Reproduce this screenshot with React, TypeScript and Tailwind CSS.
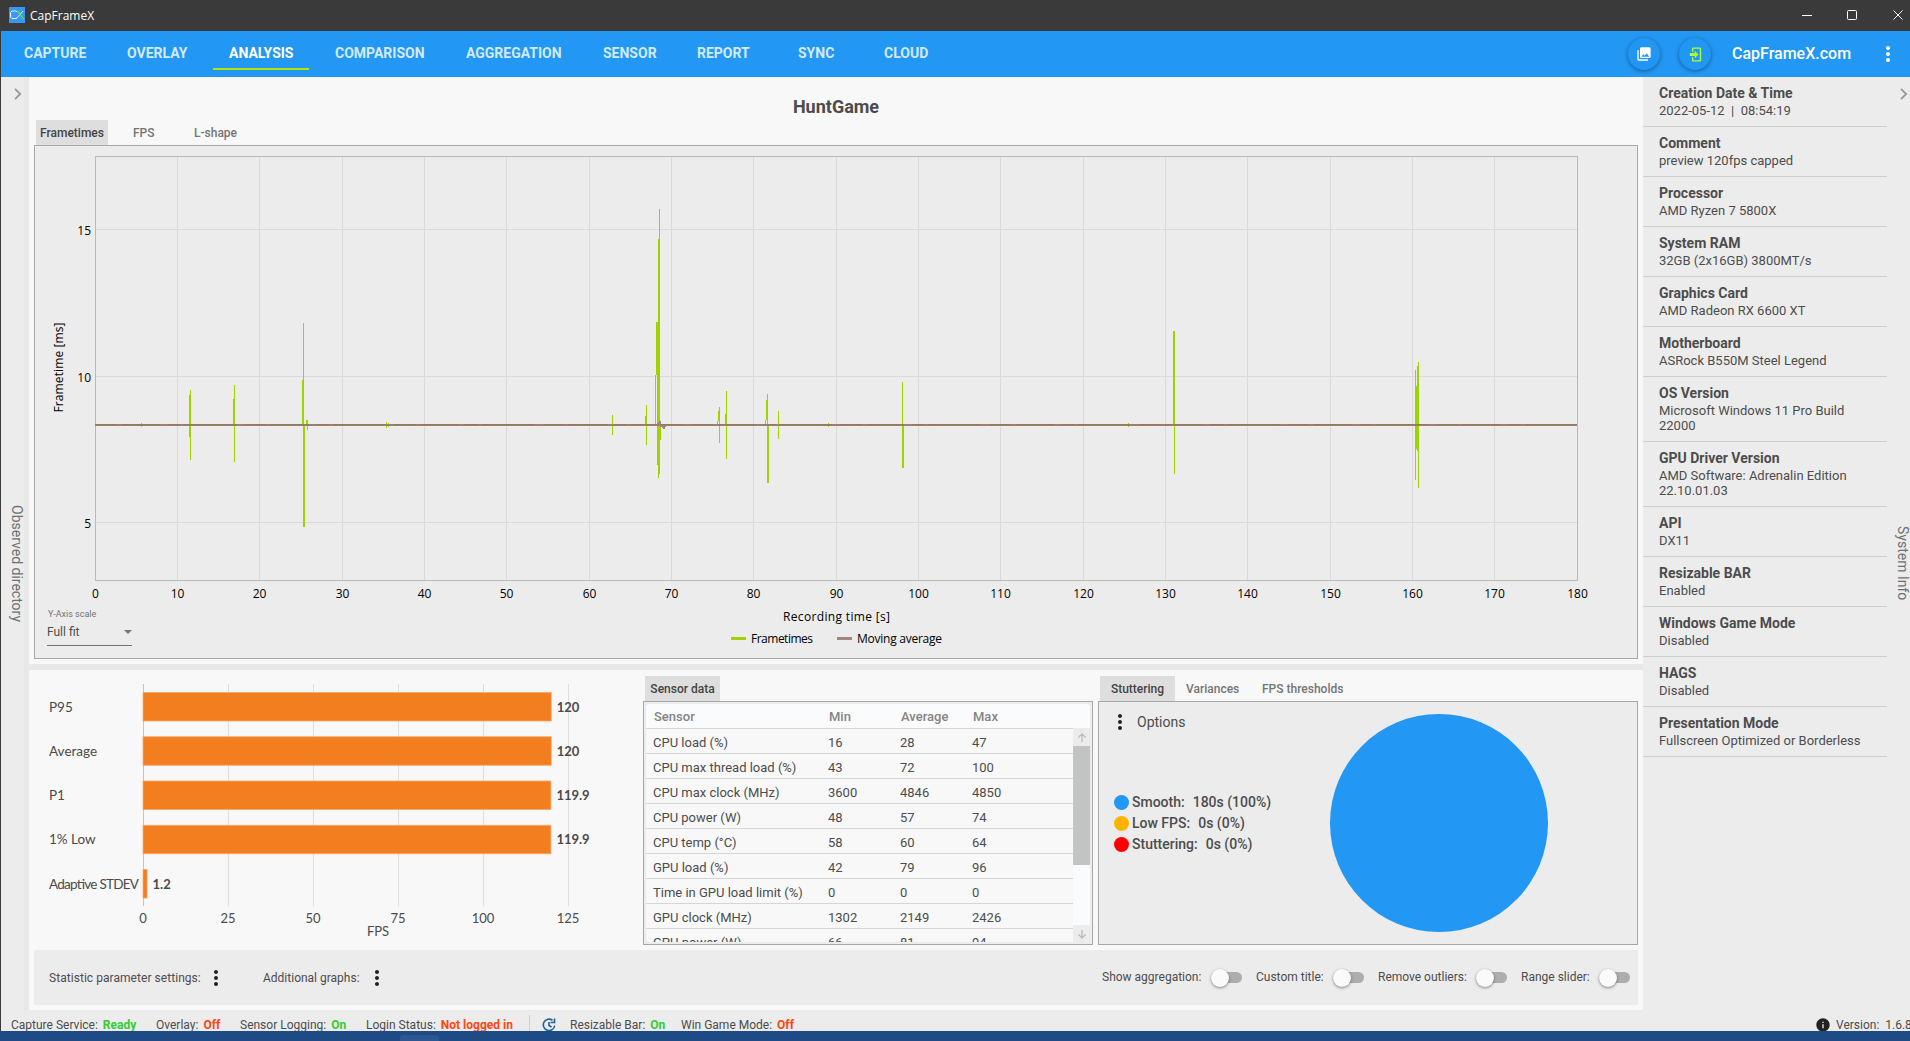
import type { ReactNode } from "react";
import { MdCollections, MdMoreVert, MdInfo } from "react-icons/md";

const navItems = [
  { label: "CAPTURE", width: "w-[103px]" },
  { label: "OVERLAY", width: "w-[102px]" },
  { label: "ANALYSIS", width: "w-[106px]" },
  { label: "COMPARISON", width: "w-[131px]" },
  { label: "AGGREGATION", width: "w-[137px]" },
  { label: "SENSOR", width: "w-[94px]" },
  { label: "REPORT", width: "w-[101px]" },
  { label: "SYNC", width: "w-[86px]" },
  { label: "CLOUD", width: "w-[90px]" },
];

const systemInfo = [
  ["Creation Date & Time", "2022-05-12  |  08:54:19"],
  ["Comment", "preview 120fps capped"],
  ["Processor", "AMD Ryzen 7 5800X"],
  ["System RAM", "32GB (2x16GB) 3800MT/s"],
  ["Graphics Card", "AMD Radeon RX 6600 XT"],
  ["Motherboard", "ASRock B550M Steel Legend"],
  ["OS Version", "Microsoft Windows 11 Pro Build\n22000"],
  ["GPU Driver Version", "AMD Software: Adrenalin Edition\n22.10.01.03"],
  ["API", "DX11"],
  ["Resizable BAR", "Enabled"],
  ["Windows Game Mode", "Disabled"],
  ["HAGS", "Disabled"],
  ["Presentation Mode", "Fullscreen Optimized or Borderless"],
];

const sensors = [
  ["CPU load (%)", 16, 28, 47],
  ["CPU max thread load (%)", 43, 72, 100],
  ["CPU max clock (MHz)", 3600, 4846, 4850],
  ["CPU power (W)", 48, 57, 74],
  ["CPU temp (°C)", 58, 60, 64],
  ["GPU load (%)", 42, 79, 96],
  ["Time in GPU load limit (%)", 0, 0, 0],
  ["GPU clock (MHz)", 1302, 2149, 2426],
  ["GPU power (W)", 66, 81, 94],
];

const fpsBars = [
  { label: "P95", value: 120 },
  { label: "Average", value: 120 },
  { label: "P1", value: 119.9 },
  { label: "1% Low", value: 119.9 },
  { label: "Adaptive STDEV", value: 1.2 },
];

// one entry per pixel column: [x, top, bottom]
const spikes = [
  [141, 423, 427],
  [189, 395, 437], [190, 390, 460],
  [233, 399, 425], [234, 385, 462],
  [302, 380, 425], [303, 323, 527], [304, 425, 527],
  [306, 420, 425], [307, 420, 430],
  [386, 422, 428], [388, 423, 427],
  [612, 415, 435],
  [645, 416, 425], [646, 405, 445],
  [655, 375, 425], [656, 322, 375], [657, 322, 465], [658, 239, 478], [659, 209, 474], [660, 425, 440],
  [717, 421, 425], [718, 411, 421], [719, 407, 443],
  [725, 414, 425], [726, 391, 459],
  [765, 420, 425], [766, 400, 420], [767, 394, 483], [768, 425, 483],
  [778, 411, 439],
  [828, 423, 427],
  [902, 382, 468], [903, 425, 468],
  [1128, 423, 427],
  [1173, 331, 425], [1174, 331, 474],
  [1415, 370, 480], [1416, 386, 449], [1417, 366, 451], [1418, 362, 488],
];

// wobble of the moving average around the big spike
const averageBumps = [
  [657, 423, 425], [658, 422, 424], [659, 421, 424], [660, 421, 427],
  [661, 425, 427], [662, 426, 428], [663, 426, 429], [664, 426, 429], [665, 425, 427],
];

function TitleBar() {
  return (
    <div className="flex h-[31px] shrink-0 items-center bg-[#3a3a3a] pl-[9px] text-white">
      <svg width="16" height="16" viewBox="0 0 16 16" className="relative -top-px">
        <rect width="16" height="16" fill="#3b96fa" />
        <path d="M8 5L7 4H3L1.500 5.500V10L3 11.500H7L8 10.500" fill="none" stroke="#e8f3ff" />
        <path d="M7 12L14 4" stroke="#d5eaff" />
        <path d="M8.500 4L14.500 12" stroke="#5fe03a" strokeWidth="1.300" />
      </svg>
      <span className="ml-[5px] font-['Open_Sans'] text-[12px] leading-4">CapFrameX</span>
      <svg width="108" height="31" className="ml-auto" fill="none" stroke="#fff">
        <path d="M0 15.500h10" />
        <rect x="45.500" y="10.500" width="9" height="9" rx="1" />
        <path d="M91.500 10.500l9 9m0-9l-9 9" />
      </svg>
    </div>
  );
}

function RoundButton({ children }: { children: ReactNode }) {
  return (
    <div className="flex size-8 items-center justify-center rounded-full bg-[#2196f3] shadow-[0_1px_4px_rgba(0,0,0,0.4)]">
      {children}
    </div>
  );
}

function Header() {
  return (
    <div className="flex h-[46px] shrink-0 items-center bg-[#2297f3] pl-[7px]">
      {navItems.map((item) => {
        const active = item.label === "ANALYSIS";
        return (
          <div key={item.label} className={`pb-[2px] ${item.width}`}>
            <div
              className={
                active
                  ? "relative w-24 px-4 text-[14px] leading-5 font-bold text-white after:absolute after:top-[25px] after:left-0 after:h-[2px] after:w-24 after:bg-[#aee600]"
                  : "px-4 text-[14px] leading-5 font-bold whitespace-nowrap text-[#d3eafd]"
              }
            >
              {item.label}
            </div>
          </div>
        );
      })}
      <div className="ml-auto flex items-center pr-[10px]">
        <RoundButton>
          <MdCollections size={16} color="#fff" />
        </RoundButton>
        <div className="w-[19px]" />
        <RoundButton>
          <svg width="17" height="17" viewBox="-1 0 24 24" fill="#adff2f">
            <path d="M10,17.25V14H3V10H10V6.75L15.25,12L10,17.25M8,2H17A2,2 0 0,1 19,4V20A2,2 0 0,1 17,22H8A2,2 0 0,1 6,20V16H8V20H17V4H8V8H6V4A2,2 0 0,1 8,2Z" />
          </svg>
        </RoundButton>
        <span className="ml-[21px] w-[144px] text-[16px] leading-6 font-medium text-white">CapFrameX.com</span>
        <MdMoreVert size={24} color="#fff" />
      </div>
    </div>
  );
}

function Chevron() {
  return (
    <svg width="8" height="12" viewBox="0 0 8 12" fill="none" stroke="#999" strokeWidth="1.800">
      <path d="M1 0.800L6.200 6L1 11.200" />
    </svg>
  );
}

function FrametimeChart() {
  const ticks = Array.from({ length: 19 }, (_, i) => i * 10);
  const xPos = (t: number) => Math.floor(95 + (t * 1482) / 180) + 0.5;
  return (
    <svg
      width="1602"
      height="512"
      viewBox="35 146 1602 512"
      className="block"
      fontFamily="'Open Sans', sans-serif"
      fontSize="12"
      shapeRendering="crispEdges"
    >
      {ticks.map((t) => (
        <g key={t}>
          <path d={`M${xPos(t)} 156V580`} stroke="#dadada" />
          <text x={xPos(t)} y="598" textAnchor="middle">{t}</text>
        </g>
      ))}
      {[[15, 229], [10, 376], [5, 522]].map(([v, y]) => (
        <g key={v}>
          <path d={`M95 ${y + 0.5}H1577`} stroke="#dadada" />
          <text x="91" y={y + 6} textAnchor="end">{v}</text>
        </g>
      ))}
      <rect x="95.500" y="156.500" width="1482" height="424" fill="none" stroke="#b9b9b9" />
      {spikes.map(([x, top, bottom]) => (
        <rect key={x} x={x} y={top} width="1" height={bottom - top} fill="#9ed300" />
      ))}
      <rect x="95" y="424" width="1482" height="2" fill="#9c8078" />
      <path d="M96 424.500H1577" stroke="#8f7d4c" strokeDasharray="21 5 38 7 13 4 52 9" />
      {averageBumps.map(([x, top, bottom]) => (
        <rect key={x} x={x} y={top} width="1" height={bottom - top} fill="#a1887f" />
      ))}
      <text transform="translate(63 367.500) rotate(-90)" textAnchor="middle" textLength="90">Frametime [ms]</text>
      <text x="836.500" y="621" textAnchor="middle" textLength="107">Recording time [s]</text>
      <rect x="731" y="637" width="15" height="3" fill="#9ed300" />
      <text x="751" y="643" textLength="62">Frametimes</text>
      <rect x="837" y="637" width="15" height="3" fill="#a1887f" />
      <text x="857" y="643" textLength="85">Moving average</text>
    </svg>
  );
}

function FpsBarChart() {
  const scale = 3.402;
  return (
    <svg width="609" height="269" viewBox="34 676 609 269" fontFamily="Lato, sans-serif" fontSize="13.500" fill="#4a4a4a">
      {[0, 25, 50, 75, 100, 125].map((v) => {
        const x = Math.floor(143 + v * scale) + 0.5;
        return (
          <g key={v}>
            <path d={`M${x} 684V906`} stroke={v === 0 ? "#c4c4c4" : "#dedede"} />
            <text x={x - 0.5} y="923" textAnchor="middle" fontSize="13">{v}</text>
          </g>
        );
      })}
      {fpsBars.map((bar, i) => {
        const y = 692.5 + i * 44.25;
        const w = bar.value * scale;
        return (
          <g key={bar.label}>
            <rect x="143" y={y} width={w} height="28.500" fill="#f37e20" stroke="#f7a869" strokeWidth="0.800" />
            <text x="49" y={y + 19} textLength={bar.label === "Adaptive STDEV" ? 90 : undefined}>{bar.label}</text>
            <text x={143 + w + 5.5} y={y + 19} fontWeight="bold" fontSize="13">{bar.value}</text>
          </g>
        );
      })}
      <text x="378" y="936" textAnchor="middle" fontSize="13">FPS</text>
    </svg>
  );
}

function SensorTable() {
  return (
    <div className="w-[450px]">
      <div className="ml-[2px] flex h-[25px] w-[75px] items-center justify-center bg-[#dedede] text-[12px] font-medium text-[#444]">
        Sensor data
      </div>
      <div className="h-[244px] border border-[#a8a8a8] bg-[#ececec] p-[2px]">
        <div className="flex h-full flex-col overflow-hidden rounded-[4px] bg-[#f8f8f8]">
          <div className="flex h-[24px] shrink-0 items-center bg-[#fafbfd] pt-px pl-[8px] text-[13px] font-medium text-[#848484]">
            <span className="w-[175px]">Sensor</span>
            <span className="w-[72px]">Min</span>
            <span className="w-[72px]">Average</span>
            <span>Max</span>
          </div>
          <div className="flex min-h-0 flex-1">
            <div className="w-[427px] overflow-hidden border-t border-[#d6d6d6] text-[13px] text-[#4c4c4c]">
              {sensors.map(([name, min, avg, max]) => (
                <div key={name} className="flex h-[25px] items-center border-b border-[#d6d6d6] pt-[3px] pl-[7px]">
                  <span className="w-[175px]">{name}</span>
                  <span className="w-[72px]">{min}</span>
                  <span className="w-[72px]">{avg}</span>
                  <span>{max}</span>
                </div>
              ))}
            </div>
            <div className="flex w-[17px] flex-col bg-[#fafbfd] text-[#bcbcbc]">
              <svg width="17" height="18" className="bg-[#ececec]" fill="none" stroke="currentColor" strokeWidth="1.300">
                <path d="M9 14V6M5.500 9.500L9 6L12.500 9.500" />
              </svg>
              <div className="h-[119px] bg-[#c2c3c3]" />
              <svg width="17" height="17" className="mt-auto bg-[#ececec]" fill="none" stroke="currentColor" strokeWidth="1.300">
                <path d="M9 5V13M5.500 9.500L9 13L12.500 9.500" />
              </svg>
            </div>
          </div>
        </div>
      </div>
    </div>
  );
}

function StutterPanel() {
  const legend = [
    { color: "bg-[#2297f3]", name: "Smooth:", value: "180s (100%)" },
    { color: "bg-[#ffb300]", name: "Low FPS:", value: "0s (0%)" },
    { color: "bg-[#ff0000]", name: "Stuttering:", value: "0s (0%)" },
  ];
  return (
    <div className="ml-[5px] w-[540px]">
      <div className="flex h-[25px] items-center pl-[2px] text-[12px] font-medium text-[#757575]">
        <span className="flex h-full w-[75px] items-center justify-center bg-[#dedede] text-[#444]">Stuttering</span>
        <span className="ml-[11px] w-[76px]">Variances</span>
        <span>FPS thresholds</span>
      </div>
      <div className="flex h-[244px] border border-[#a8a8a8] bg-[#ececec]">
        <div className="w-[231px] pt-[8px] text-[#4c4c4c]">
          <div className="flex items-center pl-[9px] text-[14px]">
            <MdMoreVert size={24} color="#222" />
            <span className="ml-[5px]">Options</span>
          </div>
          <div className="mt-[58px] pl-[15px] text-[14px] leading-[21px] font-medium">
            {legend.map((l) => (
              <div key={l.name} className="flex items-center">
                <span className={`mr-[3px] size-[15px] rounded-full ${l.color}`} />
                <span className="mr-[8px]">{l.name}</span>
                <span>{l.value}</span>
              </div>
            ))}
          </div>
        </div>
        <div className="mt-[12px] size-[218px] rounded-full bg-[#2297f3]" />
      </div>
    </div>
  );
}

function Toggle({ label, width }: { label: string; width: string }) {
  return (
    <div className={`flex items-center ${width}`}>
      <span className="relative -top-px whitespace-nowrap">{label}</span>
      <span className="ml-auto flex h-[11px] w-[31px] items-center rounded-full bg-[#adadad]">
        <span className="size-[18px] rounded-full bg-[#fafafa] shadow-[0_1px_3px_rgba(0,0,0,0.45)]" />
      </span>
    </div>
  );
}

function OptionsBar() {
  return (
    <div className="mt-[5px] ml-[5px] flex h-[55px] w-[1604px] items-center bg-[#ececec] pl-[15px] text-[12px] whitespace-nowrap text-[#4c4c4c]">
      <span className="w-[155px] tracking-[0.050px]">Statistic parameter settings:</span>
      <MdMoreVert size={24} color="#222" />
      <span className="ml-[35px] w-[102px]">Additional graphs:</span>
      <MdMoreVert size={24} color="#222" />
      <div className="ml-auto flex gap-[14px] pr-[8px]">
        <Toggle label="Show aggregation:" width="w-[140px]" />
        <Toggle label="Custom title:" width="w-[108px]" />
        <Toggle label="Remove outliers:" width="w-[129px]" />
        <Toggle label="Range slider:" width="w-[109px]" />
      </div>
    </div>
  );
}

function Status({ label, value, ok, width }: { label: string; value: string; ok?: boolean; width: string }) {
  return (
    <div className={`flex gap-[5px] whitespace-nowrap ${width}`}>
      <span>{label}</span>
      <span className={ok ? "font-bold text-[#32cd32]" : "font-bold text-[#ff4510]"}>{value}</span>
    </div>
  );
}

function StatusBar() {
  return (
    <div className="flex h-[21px] shrink-0 overflow-hidden bg-[#ececec] pl-[10px] text-[12px] leading-[30px] text-[#4c4c4c]">
      <Status label="Capture Service:" value="Ready" ok width="w-[145px]" />
      <Status label="Overlay:" value="Off" width="w-[84px]" />
      <Status label="Sensor Logging:" value="On" ok width="w-[126px]" />
      <Status label="Login Status:" value="Not logged in" width="w-[163px]" />
      <div className="mt-[5px] h-[16px] w-px bg-[#cfcfcf]" />
      <svg width="14" height="14" viewBox="0 0 14 14" className="mt-[8px] mr-[14px] ml-[12px]" fill="none" stroke="#1f6391" strokeWidth="1.600">
        <path d="M10.500 2.300A5.700 5.700 0 1 0 12.700 7.500M12.500 0.500V4.500H8.500M7 4V7.500L9.500 9" />
      </svg>
      <Status label="Resizable Bar:" value="On" ok width="w-[111px]" />
      <Status label="Win Game Mode:" value="Off" width="w-[140px]" />
      <MdInfo size={16} color="#222" className="mt-[7px] mr-[5px] ml-auto" />
      <span className="w-[74px] whitespace-pre">Version:  1.6.8</span>
    </div>
  );
}

export default function App() {
  return (
    <div className="flex h-[1041px] w-[1910px] flex-col overflow-hidden bg-[#ececec] font-[Roboto,sans-serif]">
      <TitleBar />
      <div className="flex h-[1000px] flex-col border-l border-[#3a3a3a]">
        <Header />
        <div className="flex h-[933px] shrink-0">
          <div className="flex w-[28px] flex-col items-center border-r-[5px] border-[#e8e8e8] pt-[11px]">
            <div className="ml-[11px]">
              <Chevron />
            </div>
            <span className="mt-[405px] ml-[9px] text-[14px] leading-4 whitespace-nowrap text-[#707070] [writing-mode:vertical-rl]">
              Observed directory
            </span>
          </div>

          <main className="w-[1614px] bg-[#f8f8f8]">
            <div className="flex h-[68px] flex-col">
              <h1 className="mt-[18px] text-center text-[18px] leading-6 font-bold text-[#4c4c4c]">HuntGame</h1>
              <div className="mt-px flex h-[25px] items-center pl-[7px] text-[12px] font-medium text-[#757575]">
                <span className="flex h-full w-[72px] items-center justify-center bg-[#dedede] text-[#444]">Frametimes</span>
                <span className="ml-[25px] w-[61px]">FPS</span>
                <span>L-shape</span>
              </div>
            </div>
            <div className="relative ml-[5px] h-[514px] w-[1604px] border border-[#a8a8a8] bg-[#ececec]">
              <FrametimeChart />
              <div className="absolute top-[462px] left-[12px] w-[85px] text-[#4c4c4c]">
                <div className="pl-px text-[9px] leading-3 text-[#757575]">Y-Axis scale</div>
                <div className="mt-[3px] flex h-[23px] items-center justify-between border-b border-[#757575] pb-[4px] text-[12px]">
                  Full fit
                  <svg width="8" height="4">
                    <path d="M0 0H8L4 4Z" fill="#757575" />
                  </svg>
                </div>
              </div>
            </div>
            <div className="mt-[5px] h-[6px] bg-[#e8e8e8]" />
            <div className="mt-[6px] ml-[5px] flex h-[269px]">
              <FpsBarChart />
              <SensorTable />
              <StutterPanel />
            </div>
            <OptionsBar />
          </main>

          <aside className="w-[244px]">
            {systemInfo.map(([title, value]) => (
              <div key={title} className="border-b border-[#cdcdcd] pt-[6px] pb-[8px] pl-4 text-[#4c4c4c]">
                <div className="text-[14px] leading-[21px] font-bold">{title}</div>
                <div className="-mt-px text-[13px] leading-[15px] whitespace-pre">{value}</div>
              </div>
            ))}
          </aside>
          <div className="w-[23px] pt-[11px] pl-[13px]">
            <Chevron />
            <span className="mt-[426px] ml-[-5px] block text-[14px] leading-4 whitespace-nowrap text-[#707070] [writing-mode:vertical-rl]">
              System Info
            </span>
          </div>
        </div>
        <StatusBar />
      </div>
      <div className="flex h-[10px] shrink-0 bg-[#1e4a86]">
        <div className="mt-[4px] ml-[400px] h-[6px] w-[39px] rounded-t-[4px] bg-[#2d5791]" />
      </div>
    </div>
  );
}
